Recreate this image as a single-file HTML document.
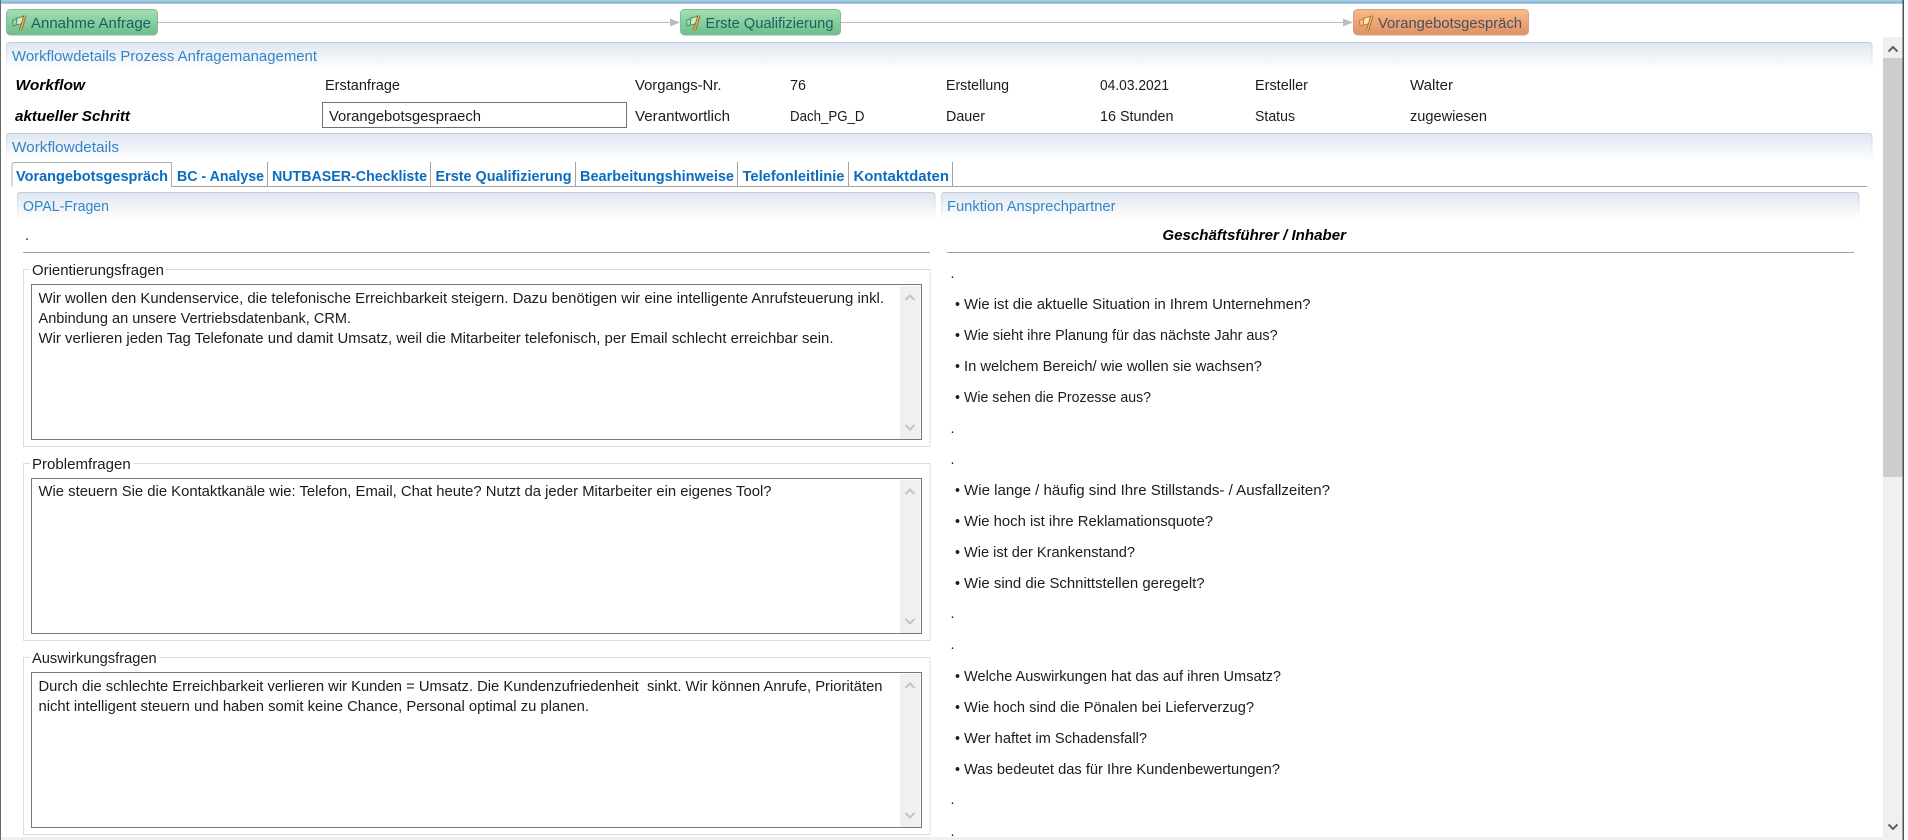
<!DOCTYPE html>
<html lang="de">
<head>
<meta charset="utf-8">
<title>Workflowdetails</title>
<style>
html,body{margin:0;padding:0;background:#fff;width:1908px;height:840px;overflow:hidden}
svg{display:block;position:absolute;left:0;top:0}
text{font-family:"Liberation Sans",sans-serif;font-size:14.3px;fill:#1c1c1c;white-space:pre}
.h{fill:#3385c6}
.b{font-weight:bold;font-style:italic;fill:#000}
.t{font-weight:bold;fill:#0b6cbf}
.btn{fill:#1f5d63}
.o{fill:#4a4f5c}
</style>
</head>
<body>
<svg width="1908" height="840" viewBox="0 0 1908 840" xmlns="http://www.w3.org/2000/svg">
<defs>
<linearGradient id="hg" x1="0" y1="0" x2="0" y2="1"><stop offset="0" stop-color="#dfe6f1"/><stop offset="1" stop-color="#ffffff"/></linearGradient>
<linearGradient id="hb" x1="0" y1="0" x2="0" y2="1"><stop offset="0" stop-color="#c3cfdb"/><stop offset="1" stop-color="#ffffff"/></linearGradient>
<linearGradient id="gb" x1="0" y1="0" x2="0" y2="1"><stop offset="0" stop-color="#a2e0b4"/><stop offset="1" stop-color="#6cbd8a"/></linearGradient>
<linearGradient id="ob" x1="0" y1="0" x2="0" y2="1"><stop offset="0" stop-color="#fdb987"/><stop offset="1" stop-color="#dd9268"/></linearGradient>
<linearGradient id="top" x1="0" y1="0" x2="0" y2="1"><stop offset="0" stop-color="#a9d2ec"/><stop offset="1" stop-color="#7fb4d8"/></linearGradient>
<g id="gf">
<path d="M12.500 20.500L17 18.500L16.200 25L13 26Z" fill="#a6dca0" stroke="#4f8f6c" stroke-width="1"/>
<path d="M17 18L25 16L23.500 23.500L16.200 25Z" fill="#c9efc0" stroke="#4f8f6c" stroke-width="1"/>
<path d="M20.500 30.500L25 15.500" stroke="#7d5a24" stroke-width="3" fill="none"/>
<path d="M20.500 30.500L25 15.500" stroke="#e2ad58" stroke-width="1.600" fill="none"/>
</g>
<g id="of">
<path d="M12.500 20.500L17 18.500L16.200 25L13 26Z" fill="#fbc78c" stroke="#c97a30" stroke-width="1"/>
<path d="M17 18L25 16L23.500 23.500L16.200 25Z" fill="#fee4bf" stroke="#c97a30" stroke-width="1"/>
<path d="M20.500 30.500L25 15.500" stroke="#8a5518" stroke-width="3" fill="none"/>
<path d="M20.500 30.500L25 15.500" stroke="#f0b860" stroke-width="1.600" fill="none"/>
</g>
</defs>

<!-- window frame -->
<rect x="0" y="0" width="1904" height="3" fill="url(#top)"/>
<rect x="0" y="3" width="1904" height="1" fill="#b8c4cc"/>
<rect x="0" y="0" width="1" height="840" fill="#6a6a6a"/>
<rect x="1902.500" y="0" width="1.5" height="840" fill="#505050"/>
<rect x="1" y="837" width="1882" height="3" fill="#f0f0f0"/>

<!-- main scrollbar -->
<rect x="1883" y="37" width="19.500" height="803" fill="#f0f0f0"/>
<rect x="1883" y="58" width="19.500" height="419" fill="#cdcdcd"/>
<path d="M1888.500 51.500L1893 47L1897.500 51.500" stroke="#606060" stroke-width="2" fill="none"/>
<path d="M1888.500 824.500L1893 829L1897.500 824.500" stroke="#606060" stroke-width="2" fill="none"/>

<!-- workflow steps -->
<line x1="157" y1="22.500" x2="671" y2="22.500" stroke="#bdbdbd" stroke-width="1"/>
<path d="M670 18.500L680 22.500L670 26.500Z" fill="#bdbdbd"/>
<line x1="840" y1="22.500" x2="1344" y2="22.500" stroke="#bdbdbd" stroke-width="1"/>
<path d="M1343 18.500L1353 22.500L1343 26.500Z" fill="#bdbdbd"/>

<rect x="6.500" y="9.500" width="151" height="25.500" rx="4" fill="url(#gb)" stroke="#86b899"/>
<use href="#gf"/>
<text class="btn" x="31" y="28" textLength="120" lengthAdjust="spacingAndGlyphs">Annahme Anfrage</text>

<rect x="680.500" y="9.500" width="160" height="25.500" rx="4" fill="url(#gb)" stroke="#86b899"/>
<use href="#gf" x="674"/>
<text class="btn" x="705.500" y="28" textLength="128" lengthAdjust="spacingAndGlyphs">Erste Qualifizierung</text>

<rect x="1353.500" y="9.500" width="175" height="25.500" rx="4" fill="url(#ob)" stroke="#d2a284"/>
<use href="#of" x="1347"/>
<text class="o" x="1378" y="28" textLength="144" lengthAdjust="spacingAndGlyphs">Vorangebotsgespräch</text>

<!-- header 1 -->
<path d="M6.500 70V45.500Q6.500 42.500 9.500 42.500H1869Q1872 42.500 1872 45.500V70Z" fill="url(#hg)"/>
<path d="M6.500 70V45.500Q6.500 42.500 9.500 42.500H1869Q1872 42.500 1872 45.500V70" fill="none" stroke="url(#hb)"/>
<text class="h" x="12" y="61" textLength="305" lengthAdjust="spacingAndGlyphs">Workflowdetails Prozess Anfragemanagement</text>

<!-- info rows -->
<text class="b" x="15.500" y="90" textLength="69.500" lengthAdjust="spacingAndGlyphs">Workflow</text>
<text class="b" x="15" y="121" textLength="115" lengthAdjust="spacingAndGlyphs">aktueller Schritt</text>
<text x="325" y="90" textLength="75" lengthAdjust="spacingAndGlyphs">Erstanfrage</text>
<rect x="322.500" y="102.500" width="304" height="25" fill="#fff" stroke="#6f6f6f"/>
<text x="329" y="121" textLength="152" lengthAdjust="spacingAndGlyphs">Vorangebotsgespraech</text>
<text x="635" y="90" textLength="86.500" lengthAdjust="spacingAndGlyphs">Vorgangs-Nr.</text>
<text x="635" y="121" textLength="95" lengthAdjust="spacingAndGlyphs">Verantwortlich</text>
<text x="790" y="90" textLength="16" lengthAdjust="spacingAndGlyphs">76</text>
<text x="790" y="121" textLength="74.500" lengthAdjust="spacingAndGlyphs">Dach_PG_D</text>
<text x="946" y="90" textLength="63" lengthAdjust="spacingAndGlyphs">Erstellung</text>
<text x="946" y="121" textLength="39" lengthAdjust="spacingAndGlyphs">Dauer</text>
<text x="1100" y="90" textLength="69" lengthAdjust="spacingAndGlyphs">04.03.2021</text>
<text x="1100" y="121" textLength="73.500" lengthAdjust="spacingAndGlyphs">16 Stunden</text>
<text x="1255" y="90" textLength="53" lengthAdjust="spacingAndGlyphs">Ersteller</text>
<text x="1255" y="121" textLength="40" lengthAdjust="spacingAndGlyphs">Status</text>
<text x="1410" y="90" textLength="43" lengthAdjust="spacingAndGlyphs">Walter</text>
<text x="1410" y="121" textLength="77" lengthAdjust="spacingAndGlyphs">zugewiesen</text>

<!-- header 2 -->
<path d="M6.500 161V136.500Q6.500 133.500 9.500 133.500H1869Q1872 133.500 1872 136.500V161Z" fill="url(#hg)"/>
<path d="M6.500 161V136.500Q6.500 133.500 9.500 133.500H1869Q1872 133.500 1872 136.500V161" fill="none" stroke="url(#hb)"/>
<text class="h" x="12" y="152" textLength="107" lengthAdjust="spacingAndGlyphs">Workflowdetails</text>

<!-- tabs -->
<line x1="171" y1="186.500" x2="1867" y2="186.500" stroke="#a3a3a3"/>
<path d="M12 186.500V165Q12 162.500 14.500 162.500H171.500V186.500" fill="none" stroke="#b0b0b0"/>
<g stroke="#a3a3a3">
<line x1="267.500" y1="162" x2="267.500" y2="186"/>
<line x1="430.500" y1="162" x2="430.500" y2="186"/>
<line x1="575.500" y1="162" x2="575.500" y2="186"/>
<line x1="737.500" y1="162" x2="737.500" y2="186"/>
<line x1="848.500" y1="162" x2="848.500" y2="186"/>
<line x1="952.500" y1="162" x2="952.500" y2="186"/>
</g>
<text class="t" x="16" y="181" textLength="152" lengthAdjust="spacingAndGlyphs">Vorangebotsgespräch</text>
<text class="t" x="177" y="181" textLength="87" lengthAdjust="spacingAndGlyphs">BC - Analyse</text>
<text class="t" x="272" y="181" textLength="155" lengthAdjust="spacingAndGlyphs">NUTBASER-Checkliste</text>
<text class="t" x="435.500" y="181" textLength="136" lengthAdjust="spacingAndGlyphs">Erste Qualifizierung</text>
<text class="t" x="580" y="181" textLength="154" lengthAdjust="spacingAndGlyphs">Bearbeitungshinweise</text>
<text class="t" x="742.500" y="181" textLength="102" lengthAdjust="spacingAndGlyphs">Telefonleitlinie</text>
<text class="t" x="853.500" y="181" textLength="95.500" lengthAdjust="spacingAndGlyphs">Kontaktdaten</text>

<!-- sub headers -->
<path d="M17.500 220V195.500Q17.500 192.500 20.500 192.500H932Q935 192.500 935 195.500V220Z" fill="url(#hg)"/>
<path d="M17.500 220V195.500Q17.500 192.500 20.500 192.500H932Q935 192.500 935 195.500V220" fill="none" stroke="url(#hb)"/>
<text class="h" x="23" y="211" textLength="86" lengthAdjust="spacingAndGlyphs">OPAL-Fragen</text>
<path d="M941.500 220V195.500Q941.500 192.500 944.500 192.500H1856Q1859 192.500 1859 195.500V220Z" fill="url(#hg)"/>
<path d="M941.500 220V195.500Q941.500 192.500 944.500 192.500H1856Q1859 192.500 1859 195.500V220" fill="none" stroke="url(#hb)"/>
<text class="h" x="947" y="211" textLength="168.500" lengthAdjust="spacingAndGlyphs">Funktion Ansprechpartner</text>

<!-- left column -->
<text x="25" y="240">.</text>
<line x1="23" y1="252.500" x2="930" y2="252.500" stroke="#a3a3a3"/>

<!-- fieldset 1 -->
<rect x="23.500" y="269.500" width="906.500" height="177" fill="#fff" stroke="#dcdcdc"/>
<rect x="30" y="262" width="136" height="14" fill="#fff"/>
<text x="32" y="275" textLength="132" lengthAdjust="spacingAndGlyphs">Orientierungsfragen</text>
<rect x="31.500" y="284.500" width="890" height="155" fill="#fff" stroke="#777"/>
<rect x="900" y="286" width="20.500" height="153" fill="#f0f0f0"/>
<path d="M905.500 300L910 295.500L914.500 300" stroke="#c4c4c4" stroke-width="2" fill="none"/>
<path d="M905.500 425L910 429.500L914.500 425" stroke="#c4c4c4" stroke-width="2" fill="none"/>
<text x="38.500" y="303" textLength="845.500" lengthAdjust="spacingAndGlyphs">Wir wollen den Kundenservice, die telefonische Erreichbarkeit steigern. Dazu benötigen wir eine intelligente Anrufsteuerung inkl.</text>
<text x="38.500" y="323" textLength="312.500" lengthAdjust="spacingAndGlyphs">Anbindung an unsere Vertriebsdatenbank, CRM.</text>
<text x="38.500" y="343" textLength="795" lengthAdjust="spacingAndGlyphs">Wir verlieren jeden Tag Telefonate und damit Umsatz, weil die Mitarbeiter telefonisch, per Email schlecht erreichbar sein.</text>

<!-- fieldset 2 -->
<rect x="23.500" y="463.500" width="906.500" height="177" fill="#fff" stroke="#dcdcdc"/>
<rect x="30" y="456" width="103" height="14" fill="#fff"/>
<text x="32" y="469" textLength="98.700" lengthAdjust="spacingAndGlyphs">Problemfragen</text>
<rect x="31.500" y="478.500" width="890" height="155" fill="#fff" stroke="#777"/>
<rect x="900" y="480" width="20.500" height="153" fill="#f0f0f0"/>
<path d="M905.500 494L910 489.500L914.500 494" stroke="#c4c4c4" stroke-width="2" fill="none"/>
<path d="M905.500 619L910 623.500L914.500 619" stroke="#c4c4c4" stroke-width="2" fill="none"/>
<text x="38.500" y="496" textLength="733" lengthAdjust="spacingAndGlyphs">Wie steuern Sie die Kontaktkanäle wie: Telefon, Email, Chat heute? Nutzt da jeder Mitarbeiter ein eigenes Tool?</text>

<!-- fieldset 3 -->
<rect x="23.500" y="657.500" width="906.500" height="177" fill="#fff" stroke="#dcdcdc"/>
<rect x="30" y="650" width="129" height="14" fill="#fff"/>
<text x="32" y="663" textLength="124.700" lengthAdjust="spacingAndGlyphs">Auswirkungsfragen</text>
<rect x="31.500" y="672.500" width="890" height="155" fill="#fff" stroke="#777"/>
<rect x="900" y="674" width="20.500" height="153" fill="#f0f0f0"/>
<path d="M905.500 688L910 683.500L914.500 688" stroke="#c4c4c4" stroke-width="2" fill="none"/>
<path d="M905.500 813L910 817.500L914.500 813" stroke="#c4c4c4" stroke-width="2" fill="none"/>
<text x="38.500" y="691" textLength="844" lengthAdjust="spacingAndGlyphs">Durch die schlechte Erreichbarkeit verlieren wir Kunden = Umsatz. Die Kundenzufriedenheit  sinkt. Wir können Anrufe, Prioritäten</text>
<text x="38.500" y="711" textLength="550.500" lengthAdjust="spacingAndGlyphs">nicht intelligent steuern und haben somit keine Chance, Personal optimal zu planen.</text>

<!-- right column -->
<text class="b" x="1162.400" y="240" textLength="183.600" lengthAdjust="spacingAndGlyphs">Geschäftsführer / Inhaber</text>
<line x1="947" y1="252.500" x2="1854" y2="252.500" stroke="#a3a3a3"/>

<text x="950.500" y="278">.</text>
<text x="955" y="309">•</text><text x="964" y="309" textLength="346.500" lengthAdjust="spacingAndGlyphs">Wie ist die aktuelle Situation in Ihrem Unternehmen?</text>
<text x="955" y="340">•</text><text x="964" y="340" textLength="313.600" lengthAdjust="spacingAndGlyphs">Wie sieht ihre Planung für das nächste Jahr aus?</text>
<text x="955" y="371">•</text><text x="964" y="371" textLength="298" lengthAdjust="spacingAndGlyphs">In welchem Bereich/ wie wollen sie wachsen?</text>
<text x="955" y="402">•</text><text x="964" y="402" textLength="187" lengthAdjust="spacingAndGlyphs">Wie sehen die Prozesse aus?</text>
<text x="950.500" y="433">.</text>
<text x="950.500" y="464">.</text>
<text x="955" y="495">•</text><text x="964" y="495" textLength="366" lengthAdjust="spacingAndGlyphs">Wie lange / häufig sind Ihre Stillstands- / Ausfallzeiten?</text>
<text x="955" y="526">•</text><text x="964" y="526" textLength="249" lengthAdjust="spacingAndGlyphs">Wie hoch ist ihre Reklamationsquote?</text>
<text x="955" y="557">•</text><text x="964" y="557" textLength="171" lengthAdjust="spacingAndGlyphs">Wie ist der Krankenstand?</text>
<text x="955" y="588">•</text><text x="964" y="588" textLength="240.600" lengthAdjust="spacingAndGlyphs">Wie sind die Schnittstellen geregelt?</text>
<text x="950.500" y="618">.</text>
<text x="950.500" y="649">.</text>
<text x="955" y="681">•</text><text x="964" y="681" textLength="317" lengthAdjust="spacingAndGlyphs">Welche Auswirkungen hat das auf ihren Umsatz?</text>
<text x="955" y="712">•</text><text x="964" y="712" textLength="290" lengthAdjust="spacingAndGlyphs">Wie hoch sind die Pönalen bei Lieferverzug?</text>
<text x="955" y="743">•</text><text x="964" y="743" textLength="183" lengthAdjust="spacingAndGlyphs">Wer haftet im Schadensfall?</text>
<text x="955" y="774">•</text><text x="964" y="774" textLength="316" lengthAdjust="spacingAndGlyphs">Was bedeutet das für Ihre Kundenbewertungen?</text>
<text x="950.500" y="804">.</text>
<text x="950.500" y="836">.</text>
</svg>
</body>
</html>
